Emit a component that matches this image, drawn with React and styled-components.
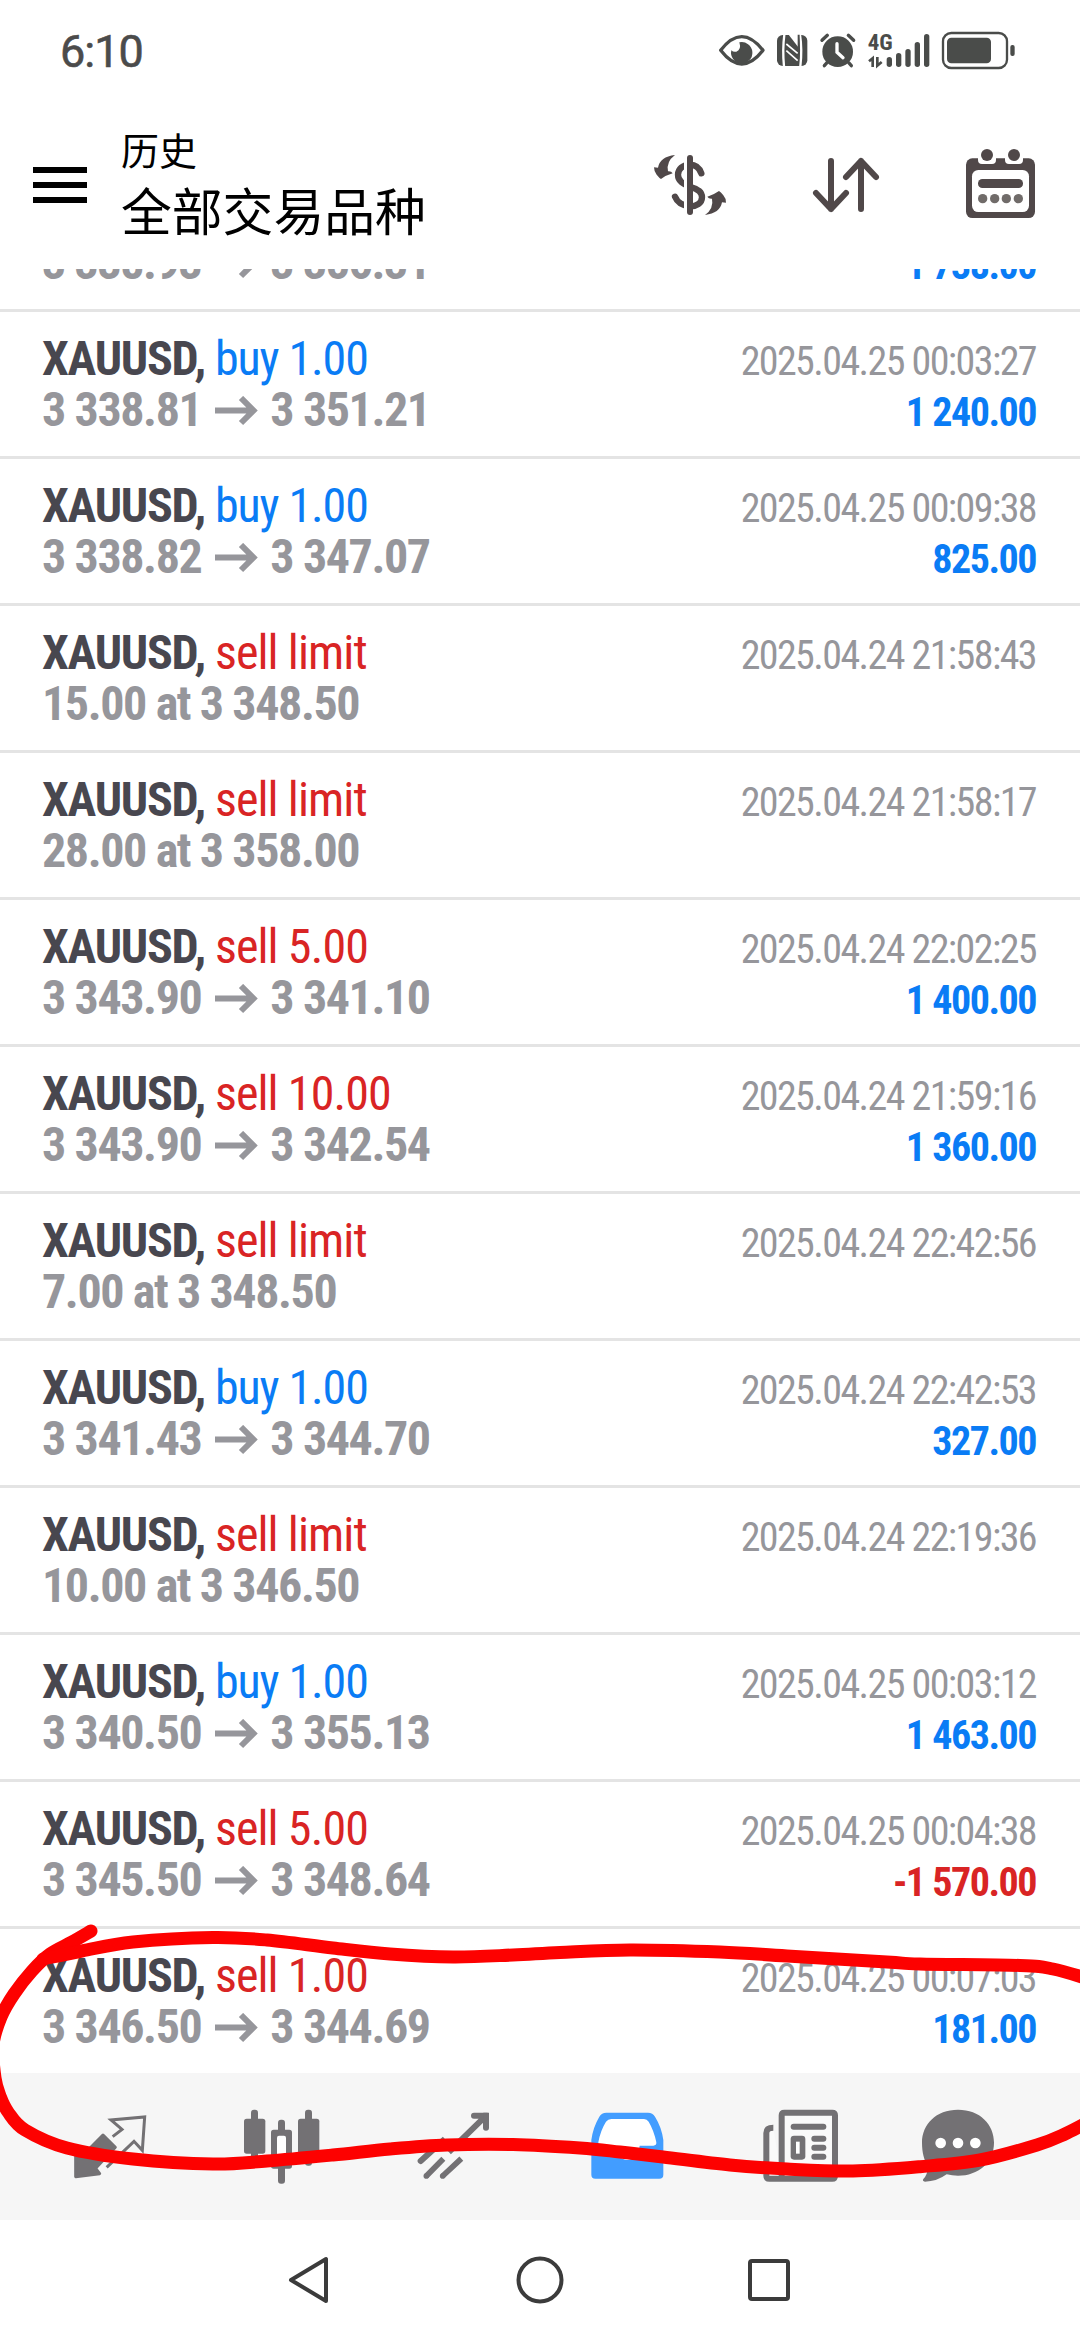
import React from "react";
import styled, { createGlobalStyle, css } from "styled-components";

const Global = createGlobalStyle`
  * { box-sizing: border-box; }
  body { margin: 0; background: #fff; font-family: "Roboto Condensed", Roboto, "Noto Sans CJK SC", sans-serif; font-stretch: 75%; }
  svg { display: block; flex: none; }
`;

const BLUE = "#0a7cf5";
const RED = "#d92424";

const Screen = styled.div`
  position: relative;
  width: 1080px;
  height: 2340px;
  display: flex;
  flex-direction: column;
  overflow: hidden;
  background: #fff;
`;

const StatusBar = styled.div`
  height: 102px;
  flex: none;
  padding: 0 65px 0 60px;
  display: flex;
  align-items: center;
  justify-content: space-between;
`;

const Clock = styled.div`
  padding-top: 2px;
  font: 400 45px/50px Roboto, sans-serif;
  font-stretch: 100%;
  letter-spacing: -1px;
  color: #4b4b4b;
  -webkit-text-stroke: 0.6px #4b4b4b;
`;

const StatusIcons = styled.div`
  display: flex;
  align-items: center;
  gap: 12px;
`;

const Header = styled.header`
  height: 167px;
  flex: none;
  display: flex;
  align-items: center;
  padding: 0 35px 1px 33px;
`;

const MenuButton = styled.div`
  width: 54px;
  display: flex;
  flex-direction: column;
  gap: 9px;
`;

const MenuLine = styled.span`
  height: 6px;
  background: #000;
`;

const Titles = styled.div`
  flex: 1;
  margin-left: 34px;
  padding-bottom: 13px;
  font-family: "Noto Sans CJK SC", sans-serif;
  color: #000;
`;

const Overline = styled.div`
  font-size: 38px;
  line-height: 60px;
`;

const Title = styled.div`
  font-size: 50.8px;
  line-height: 60px;
`;

const Actions = styled.div`
  display: flex;
  gap: 65px;
`;

const List = styled.div`
  height: 1804px;
  flex: none;
  display: flex;
  flex-direction: column;
  overflow: hidden;
`;

const Row = styled.div`
  height: 147px;
  flex: none;
  border-top: 3px solid #e4e4e4;
  padding: 21px 44px 0 42px;
  display: flex;
  justify-content: space-between;
`;

const ScrolledRow = styled.div`
  height: 40px;
  flex: none;
  overflow: hidden;
  padding: 0 44px 0 42px;
  display: flex;
  align-items: flex-start;
  justify-content: space-between;
`;

const Column = styled.div`
  display: flex;
  flex-direction: column;
  align-items: ${(p) => (p.$end ? "flex-end" : "flex-start")};
  padding-top: ${(p) => (p.$end ? "3px" : "0")};
`;

const line = css`
  height: 51px;
  flex: none;
  display: flex;
  align-items: baseline;
  line-height: 51px;
  white-space: pre;
`;

const SymbolLine = styled.div`
  ${line}
  font-size: 48px;
  font-weight: 700;
  letter-spacing: -1.25px;
  color: #48474f;
`;

const Side = styled.span`
  font-weight: 400;
  letter-spacing: ${(p) => (p.$sell ? "-0.9px" : "-1.1px")};
  color: ${(p) => (p.$sell ? RED : BLUE)};
`;

const PriceLine = styled.div`
  ${line}
  margin-top: ${(p) => (p.$clipped ? "-32px" : "0")};
  font-size: 48px;
  font-weight: 700;
  letter-spacing: -1.4px;
  color: #96969b;
`;

const DateLine = styled.div`
  ${line}
  font-size: 40px;
  letter-spacing: -1.58px;
  color: #96969b;
`;

const Profit = styled.div`
  ${line}
  margin-top: ${(p) => (p.$clipped ? "-29px" : "0")};
  font-size: 40px;
  font-weight: 700;
  letter-spacing: -1.5px;
  color: ${(p) => (p.$loss ? RED : BLUE)};
`;

const ArrowSvg = styled.svg`
  margin: 0 12px 0 14px;
`;

const TabBar = styled.nav`
  height: 147px;
  flex: none;
  background: #f6f6f6;
  padding: 0 50px 0 24px;
  display: grid;
  grid-template-columns: 172px 172px 172px 173px 173px 144px;
  place-items: center;
`;

const SystemNav = styled.div`
  flex: 1;
  display: flex;
  justify-content: center;
  align-items: center;
  gap: 160px;
`;

const Ink = styled.svg`
  position: absolute;
  left: 0;
  top: 0;
  pointer-events: none;
`;

function StatusIcon({ x, w, children }) {
  return (
    <svg width={w} height="40" viewBox={`${x} 93 ${w * 3} 120`} fill="#4a4c4a" stroke="none" overflow="visible">
      {children}
    </svg>
  );
}

function Icon({ x, y, color, children }) {
  return (
    <svg width="90" height="90" viewBox={`${x} ${y} 270 270`} fill={color}>
      {children}
    </svg>
  );
}

const TAB = "#737174";
const ACTION = "#504849";

function Arrow() {
  return (
    <ArrowSvg width="43" height="30" viewBox="0 0 43 30">
      <path d="M0 14.500H38.500M26 2L38.500 14.500L26 27" fill="none" stroke="#96969b" strokeWidth="6" />
    </ArrowSvg>
  );
}

const scrolled = { from: "3 338.93", to: "3 356.31", profit: "1 738.00" };

const deals = [
  { side: "buy", size: "1.00", from: "3 338.81", to: "3 351.21", date: "2025.04.25 00:03:27", profit: "1 240.00" },
  { side: "buy", size: "1.00", from: "3 338.82", to: "3 347.07", date: "2025.04.25 00:09:38", profit: "825.00" },
  { side: "sell", size: "limit", at: "15.00 at 3 348.50", date: "2025.04.24 21:58:43" },
  { side: "sell", size: "limit", at: "28.00 at 3 358.00", date: "2025.04.24 21:58:17" },
  { side: "sell", size: "5.00", from: "3 343.90", to: "3 341.10", date: "2025.04.24 22:02:25", profit: "1 400.00" },
  { side: "sell", size: "10.00", from: "3 343.90", to: "3 342.54", date: "2025.04.24 21:59:16", profit: "1 360.00" },
  { side: "sell", size: "limit", at: "7.00 at 3 348.50", date: "2025.04.24 22:42:56" },
  { side: "buy", size: "1.00", from: "3 341.43", to: "3 344.70", date: "2025.04.24 22:42:53", profit: "327.00" },
  { side: "sell", size: "limit", at: "10.00 at 3 346.50", date: "2025.04.24 22:19:36" },
  { side: "buy", size: "1.00", from: "3 340.50", to: "3 355.13", date: "2025.04.25 00:03:12", profit: "1 463.00" },
  { side: "sell", size: "5.00", from: "3 345.50", to: "3 348.64", date: "2025.04.25 00:04:38", profit: "-1 570.00" },
  { side: "sell", size: "1.00", from: "3 346.50", to: "3 344.69", date: "2025.04.25 00:07:03", profit: "181.00" },
];

function Prices({ deal, clipped }) {
  if (deal.at) return <PriceLine>{deal.at}</PriceLine>;
  return (
    <PriceLine $clipped={clipped}>
      <span>{deal.from}</span>
      <Arrow />
      <span>{deal.to}</span>
    </PriceLine>
  );
}

function DealRow({ deal }) {
  return (
    <Row>
      <Column>
        <SymbolLine>
          XAUUSD, <Side $sell={deal.side === "sell"}>{deal.side} {deal.size}</Side>
        </SymbolLine>
        <Prices deal={deal} />
      </Column>
      <Column $end>
        <DateLine>{deal.date}</DateLine>
        {deal.profit && <Profit $loss={deal.profit[0] === "-"}>{deal.profit}</Profit>}
      </Column>
    </Row>
  );
}

const lasso = [
  [91, 1931], [72, 1942], [50, 1954], [32, 1971], [14, 1994], [1, 2017], [-7, 2045], [-5, 2078], [0, 2096],
  [8, 2112], [25, 2130], [67, 2148], [133, 2159], [213, 2164], [267, 2161], [333, 2155], [390, 2149],
  [447, 2145], [513, 2144.5], [580, 2148], [620, 2152], [663, 2157], [730, 2165], [787, 2169], [853, 2171],
  [920, 2166.7], [980, 2160], [1037, 2145], [1065, 2134], [1092, 2120],
];
const lid = [
  [43, 1959], [82, 1951], [133, 1942], [213, 1937.5], [267, 1940], [333, 1948], [390, 1954], [453, 1957],
  [513, 1955], [560, 1952.5], [630, 1950], [720, 1952], [787, 1956], [887, 1962], [920, 1964], [1020, 1965.5],
  [1053, 1969], [1092, 1980],
];

function smooth(pts) {
  let d = `M${pts[0]}`;
  for (let i = 0; i < pts.length - 1; i++) {
    const a = pts[Math.max(0, i - 1)];
    const b = pts[i];
    const c = pts[i + 1];
    const e = pts[Math.min(pts.length - 1, i + 2)];
    d += `C${b[0] + (c[0] - a[0]) / 6} ${b[1] + (c[1] - a[1]) / 6} ${c[0] - (e[0] - b[0]) / 6} ${c[1] - (e[1] - b[1]) / 6} ${c[0]} ${c[1]}`;
  }
  return d;
}

const refreshArrow = "M105 465Q60 470 54 503L42 502Q42 515 50 524Q58 534 63 537Q80 525 98 520Q94 513 84 514Q78 485 105 465Z";

export default function App() {
  return (
    <Screen>
      <Global />
      <StatusBar>
        <Clock>6:10</Clock>
        <StatusIcons>
          <StatusIcon x={238} w={46}>
            <path d="M243 151Q306 69 370 151Q306 233 243 151Z" fill="none" stroke="#4a4c4a" strokeWidth="10" strokeLinejoin="round" />
            <path d="M299 127A32 32 0 1 1 275 151Q281 157 290 155Q306 149 299 127Z" />
          </StatusIcon>
          <StatusIcon x={412} w={31}>
            <rect x="412" y="105" width="91" height="93" rx="17" />
            <path d="M434 104Q428 150 433 199M481 104Q488 150 482 199" stroke="#fff" strokeWidth="7" fill="none" />
            <path d="M440 132L474 160M440 152L474 182" stroke="#fff" strokeWidth="5" fill="none" />
            <path d="M447 104L476 142V104Z" fill="#fff" />
            <path d="M474 104V140L480 146V104Z" />
          </StatusIcon>
          <StatusIcon x={541} w={36}>
            <circle cx="594" cy="155" r="46" />
            <path d="M547 121L563 106M626 106L642 121M562 188L554 197M627 188L635 197" stroke="#4a4c4a" strokeWidth="10" strokeLinecap="round" />
            <path d="M592 131V157L610 173" stroke="#fff" strokeWidth="10" fill="none" strokeLinecap="round" />
          </StatusIcon>
          <StatusIcon x={685} w={62}>
            <text x="684" y="150" fontFamily="Roboto, sans-serif" fontWeight="700" fontSize="65" textLength="75" lengthAdjust="spacingAndGlyphs">4G</text>
            <path d="M688 184L699 175V201M713 171V197L726 186" fill="none" stroke="#4a4c4a" strokeWidth="8" />
            <rect x="741" y="171" width="16" height="30" rx="8" />
            <rect x="769" y="159" width="16" height="42" rx="8" />
            <rect x="797" y="147" width="16" height="54" rx="8" />
            <rect x="825" y="126" width="16" height="75" rx="8" />
            <rect x="853" y="102" width="16" height="99" rx="8" />
          </StatusIcon>
          <StatusIcon x={907} w={73}>
            <rect x="910" y="99" width="192" height="105" rx="25" fill="none" stroke="#4a4c4a" strokeWidth="7" />
            <rect x="922" y="113" width="132" height="77" rx="13" />
            <rect x="1112" y="135" width="13" height="33" rx="6" />
          </StatusIcon>
        </StatusIcons>
      </StatusBar>

      <Header>
        <MenuButton>
          <MenuLine />
          <MenuLine />
          <MenuLine />
        </MenuButton>
        <Titles>
          <Overline>历史</Overline>
          <Title>全部交易品种</Title>
        </Titles>
        <Actions>
          <Icon x={15} y={420} color={ACTION}>
            <path d="M184 520C176 498 162 494 150 494C128 494 114 508 114 524C114 545 132 552 150 560C175 568 186 576 186 592C186 610 168 620 150 619C128 617 112 608 105 590" fill="none" stroke={ACTION} strokeWidth="19" strokeLinecap="round" />
            <rect x="132" y="462" width="9" height="186" fill="#fff" />
            <rect x="141" y="465" width="18" height="180" rx="9" />
            <path d={refreshArrow} />
            <path d={refreshArrow} transform="rotate(180 150 555)" />
          </Icon>
          <Icon x={480} y={420} color="none">
            <path d="M573 483V627M528 579L573 627L618 579M663 627V483M618 531L663 483L708 531" stroke={ACTION} strokeWidth="18" strokeLinecap="round" strokeLinejoin="round" />
          </Icon>
          <Icon x={945} y={420} color={ACTION}>
            <rect x="978" y="475" width="207" height="179" rx="19" />
            <path d="M1014 470H1068V480Q1068 492 1056 492H1026Q1014 492 1014 480ZM1095 470H1149V480Q1149 492 1137 492H1107Q1095 492 1095 480Z" fill="#fff" />
            <circle cx="1041" cy="465" r="18" />
            <circle cx="1122" cy="465" r="18" />
            <rect x="996" y="510" width="171" height="126" rx="19" fill="#fff" />
            <rect x="1014" y="537" width="135" height="27" rx="13" />
            {[1028, 1064, 1099, 1135].map((cx) => (
              <circle key={cx} cx={cx} cy="596" r="14" fill="#706b69" />
            ))}
          </Icon>
        </Actions>
      </Header>

      <List>
        <ScrolledRow>
          <Prices deal={scrolled} clipped />
          <Profit $clipped>{scrolled.profit}</Profit>
        </ScrolledRow>
        {deals.map((d) => (
          <DealRow key={d.date + d.size} deal={d} />
        ))}
      </List>

      <TabBar>
        <Icon x={195} y={604} color={TAB}>
          <path d="M309 703L346 740L287 803L299 819L227 828L227 745L245 768Z" stroke={TAB} strokeWidth="9" strokeLinejoin="round" />
          <path d="M338 708L366 686L333 658L434 649L427 749L402 722L320 800" fill="none" stroke={TAB} strokeWidth="9" />
        </Icon>
        <Icon x={711} y={604} color={TAB}>
          <rect x="732" y="654" width="64" height="105" rx="8" />
          <rect x="753" y="627" width="21" height="160" rx="9" />
          <rect x="894" y="654" width="64" height="105" rx="8" />
          <rect x="915" y="627" width="21" height="168" rx="9" />
          <rect x="834" y="657" width="21" height="192" rx="9" />
          <rect x="813" y="687" width="63" height="117" rx="8" />
          <rect x="831" y="705" width="27" height="81" rx="6" fill="#fff" />
        </Icon>
        <Icon x={87} y={604} color="none">
          <path d="M122 781L188 721L213 748L316 647M282 645H318V681" stroke={TAB} strokeWidth="18" strokeLinecap="round" />
          <path d="M310 636H322Q327 636 327 641V655H310Z" fill={TAB} />
          <path d="M139 826L190 774M188 826L244 774" stroke={TAB} strokeWidth="17" />
          <circle cx="139" cy="826" r="8.500" fill={TAB} />
          <circle cx="188" cy="826" r="8.500" fill={TAB} />
        </Icon>
        <Icon x={604} y={604} color="#429dff">
          <path d="M644 834Q632 834 632 822V718Q637 680 656 648Q663 636 677 636H802Q816 636 823 648Q843 680 848 718V822Q848 834 836 834Z" />
          <path d="M692 655H790Q799 655 804 663Q820 690 827 725Q828 735 818 735H777C772 792 708 792 703 735H662Q652 735 653 725Q659 690 676 663Q682 655 692 655Z" fill="#fff" />
        </Icon>
        <Icon x={103} y={604} color={TAB}>
          <path d="M158 681Q137 681 137 697V825Q137 834 146 834H335Q343 834 343 825V644Q343 636 335 636H191Q183 636 183 644V834" fill="#fafafa" stroke={TAB} strokeWidth="18" />
          <rect x="210" y="669" width="107" height="18" rx="9" />
          <rect x="210" y="705" width="44" height="72" rx="10" />
          <rect x="226" y="723" width="11" height="36" fill="#fff" />
          <rect x="272" y="705" width="45" height="18" rx="9" />
          <rect x="272" y="732" width="45" height="18" rx="9" />
          <rect x="272" y="759" width="45" height="18" rx="9" />
        </Icon>
        <Icon x={579} y={604} color={TAB}>
          <path d="M714 627C780 627 822 671 822 726C822 785 775 825 714 825Q696 825 680 821Q650 843 615 843Q606 842 610 835Q622 824 625 796C612 780 606 755 606 726C606 671 648 627 714 627Z" />
          <circle cx="662" cy="727" r="16" fill="#fff" />
          <circle cx="714" cy="727" r="16" fill="#fff" />
          <circle cx="766" cy="727" r="16" fill="#fff" />
        </Icon>
      </TabBar>

      <SystemNav>
        <svg width="70" height="70" viewBox="-35 -35 70 70" fill="none" stroke="#3b3b3b" strokeWidth="4" strokeLinejoin="round">
          <path d="M-19 0L16 -21V21Z" />
        </svg>
        <svg width="70" height="70" viewBox="-35 -35 70 70" fill="none" stroke="#3b3b3b" strokeWidth="4">
          <circle r="21.500" />
        </svg>
        <svg width="70" height="70" viewBox="-35 -35 70 70" fill="none" stroke="#3b3b3b" strokeWidth="4">
          <rect x="-20" y="-19" width="38" height="38" rx="2" />
        </svg>
      </SystemNav>

      <Ink width="1080" height="2340" viewBox="0 0 1080 2340" fill="none" stroke="#fd0100" strokeWidth="13" strokeLinecap="round" strokeLinejoin="round">
        <path d={smooth(lasso)} />
        <path d={smooth(lid)} />
      </Ink>
    </Screen>
  );
}
